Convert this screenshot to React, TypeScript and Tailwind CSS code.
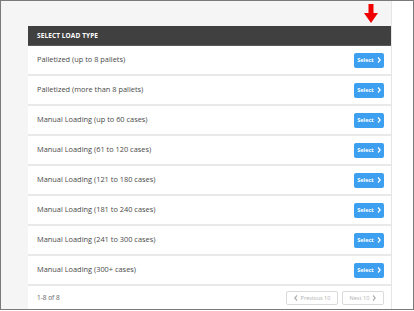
const rows = [
  "Palletized (up to 8 pallets)",
  "Palletized (more than 8 pallets)",
  "Manual Loading (up to 60 cases)",
  "Manual Loading (61 to 120 cases)",
  "Manual Loading (121 to 180 cases)",
  "Manual Loading (181 to 240 cases)",
  "Manual Loading (241 to 300 cases)",
  "Manual Loading (300+ cases)",
];

function Chevron({ dir = "right" }: { dir?: "left" | "right" }) {
  return (
    <svg width="4" height="6" viewBox="0 0 4 6" className="shrink-0">
      <path
        d={dir === "right" ? "M1 0.5 L3.2 3 L1 5.5" : "M3 0.5 L0.8 3 L3 5.5"}
        fill="none"
        stroke="currentColor"
        strokeWidth="1.2"
      />
    </svg>
  );
}

function App() {
  return (
    <div
      className="w-[414px] h-[311px] overflow-hidden bg-white"
      style={{ fontFamily: "'Open Sans', 'Liberation Sans', sans-serif" }}
    >
      <div className="w-[414px] h-[310px] border border-[#7a7a7a] flex relative">
        {/* red arrow pointing at the select column */}
        <svg
          width="14"
          height="20"
          viewBox="0 0 14 20"
          className="absolute left-[363px] top-[3px]"
        >
          <rect x="4.5" y="0" width="5" height="10" fill="#f00000" />
          <polygon points="0,9 14,9 7,19" fill="#f00000" />
        </svg>

        <div className="w-[391px] bg-[#f5f5f5] pl-[27px] pt-[25px] border-r border-[#e6e6e6]">
          <div className="bg-white h-full flex flex-col">
            <div className="h-[20px] bg-[#404040] flex items-center pl-[9px] border-b border-[#5a5a5a]">
              <span className="text-[6.5px] font-bold text-white tracking-[0.1px]">
                SELECT LOAD TYPE
              </span>
            </div>

            {rows.map((label) => (
              <div
                key={label}
                className="h-[30px] shrink-0 border-b-2 border-[#e9e9e9] flex items-center justify-between pl-[9px] pr-[7px]"
              >
                <span className="text-[7.4px] text-[#4a4a4a]">{label}</span>
                <button className="w-[30px] h-[15px] rounded-[2px] bg-[#3d9ff0] text-white text-[5.5px] font-bold flex items-center justify-center gap-[3px]">
                  Select
                  <Chevron />
                </button>
              </div>
            ))}

            <div className="flex items-center justify-between pl-[9px] pr-[7px] pt-[5px]">
              <span className="text-[6.5px] text-[#666]">1-8 of 8</span>
              <div className="flex gap-[4px]">
                <button className="w-[52px] h-[14px] border border-[#dadada] rounded-[2px] text-[5.5px] text-[#b0b0b0] flex items-center justify-center gap-[3px]">
                  <Chevron dir="left" />
                  Previous 10
                </button>
                <button className="w-[42px] h-[14px] border border-[#dadada] rounded-[2px] text-[5.5px] text-[#b0b0b0] flex items-center justify-center gap-[3px]">
                  Next 10
                  <Chevron />
                </button>
              </div>
            </div>
          </div>
        </div>
        <div className="flex-1 bg-white" />
      </div>
    </div>
  );
}

export default App;
